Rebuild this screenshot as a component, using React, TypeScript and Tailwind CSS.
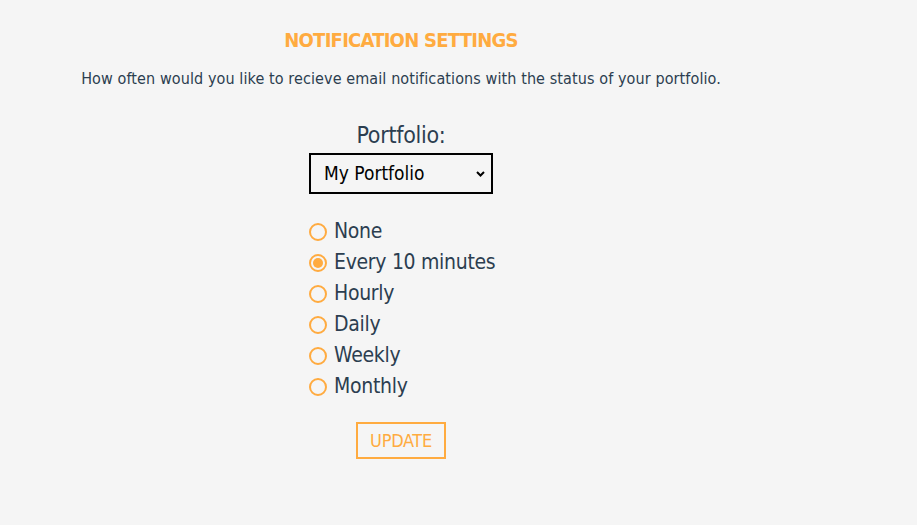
import { useState } from 'react';

const options = ['None', 'Every 10 minutes', 'Hourly', 'Daily', 'Weekly', 'Monthly'];

export default function App() {
  const [freq, setFreq] = useState('Every 10 minutes');

  return (
    <div
      className="min-h-[525px] bg-[#f5f5f5] text-[#2c3e50]"
      style={{ fontFamily: '"DejaVu Sans Condensed", "Liberation Sans Narrow", "DejaVu Sans", sans-serif' }}
    >
      <div className="w-[802px] flex flex-col items-center pt-[26px]">
        <h1 className="text-[20px] leading-[28px] font-bold text-[#ffab40] tracking-[-0.75px]">NOTIFICATION SETTINGS</h1>
        <p className="mt-[13px] text-[16px] leading-[24px] tracking-[0.1px]">
          How often would you like to recieve email notifications with the status of your portfolio.
        </p>

        <label className="mt-[30px] text-[23px] leading-[28px] tracking-[-0.3px]">Portfolio:</label>
        <div className="relative mt-[4px]">
          <select className="appearance-none w-[184px] h-[41px] border-2 border-black bg-transparent pl-[13px] text-[19px] text-black outline-none">
            <option>My Portfolio</option>
          </select>
          <svg
            className="absolute right-[8px] top-[18px] pointer-events-none"
            width="9"
            height="6"
            viewBox="0 0 9 6"
            fill="none"
            stroke="black"
            strokeWidth="2"
          >
            <path d="M1 1l3.5 3.5L8 1" />
          </svg>
        </div>

        <div className="mt-[22px] w-[184px] flex flex-col">
          {options.map((o) => (
            <label key={o} className="flex items-center h-[31px] cursor-pointer" onClick={() => setFreq(o)}>
              <span className="w-[18px] h-[18px] rounded-full border-2 border-[#ffab40] flex items-center justify-center shrink-0">
                {freq === o && <span className="w-[10px] h-[10px] rounded-full bg-[#ffab40]" />}
              </span>
              <span className="ml-[7px] text-[21px] leading-[31px] tracking-[-0.3px] whitespace-nowrap">{o}</span>
            </label>
          ))}
        </div>

        <button className="mt-[20px] w-[90px] h-[37px] border-2 border-[#ffab40] text-[#ffab40] text-[18px] tracking-[-0.3px]">
          UPDATE
        </button>
      </div>
    </div>
  );
}
